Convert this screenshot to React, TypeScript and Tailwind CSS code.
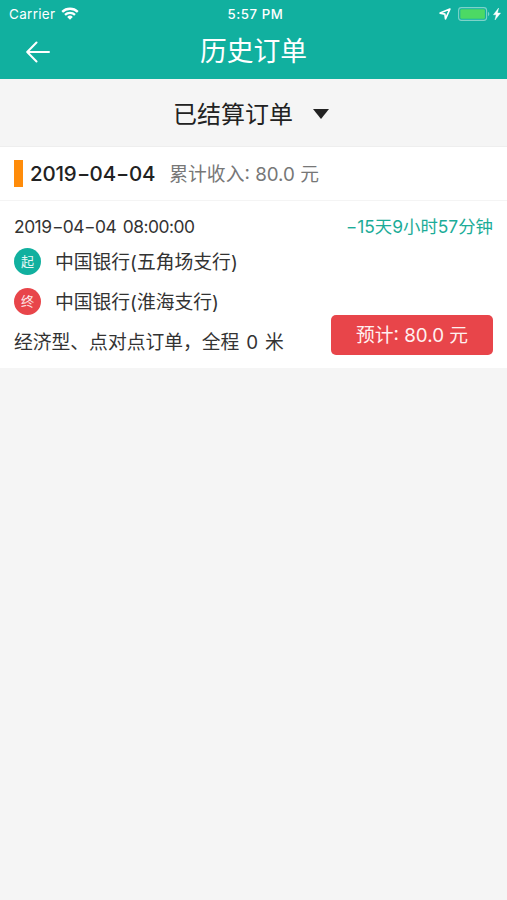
import { Fragment } from 'react';

const FONT = "font-['Inter','Noto_Sans_CJK_SC',sans-serif]";

function Dashed({ text }: { text: string }) {
  return (
    <>
      {text.split('-').map((part, i) => (
        <Fragment key={i}>
          {i > 0 && <span className="inline-block w-[0.64em] origin-center scale-x-[1.4] text-center">-</span>}
          {part}
        </Fragment>
      ))}
    </>
  );
}

function StatusBar() {
  return (
    <div className="grid h-[27px] grid-cols-3 items-center pl-[9px] pr-[5px] text-[13px] leading-none">
      <div className="flex items-center gap-[6px]">
        <span className="pt-[2px] text-[13.5px] tracking-[0.3px]">Carrier</span>
        <svg width="18" height="13" viewBox="0 0 18 13" fill="none" stroke="white" strokeWidth="2.3">
          <path d="M1.2 4.9a11.2 11.2 0 0 1 15.6 0" />
          <path d="M4 7.9a7.2 7.2 0 0 1 10 0" />
          <path d="M9 12.7 6.2 9.9a4 4 0 0 1 5.6 0z" fill="white" stroke="none" />
        </svg>
      </div>
      <span className="pt-[2px] text-center text-[13.2px] font-medium tracking-[0.6px]">5:57 PM</span>
      <div className="flex items-center justify-end">
        <svg width="12" height="12" viewBox="0 0 12 12" fill="none" stroke="white" strokeWidth="1.6" strokeLinejoin="round">
          <path d="M10.9 1.1 1.1 5.1l4.8 1 .6 4.8z" />
        </svg>
        <svg className="ml-[7px]" width="32" height="14" viewBox="0 0 32 14">
          <rect x="0.6" y="0.6" width="28" height="12.8" rx="2.8" fill="none" stroke="#7ed3c9" strokeWidth="1.1" />
          <rect x="2.3" y="2.3" width="24.6" height="9.4" rx="1.2" fill="#4cd964" />
          <path d="M30 4.8c1.8.8 1.8 3.6 0 4.4z" fill="#7ed3c9" />
        </svg>
        <svg className="ml-[3px] mr-px" width="8" height="12" viewBox="0 0 8 12" fill="white" stroke="white" strokeWidth="0.4">
          <path d="M5.6 0 .4 6.8h2.8L2 12l5.6-7H4.5z" />
        </svg>
      </div>
    </div>
  );
}

function Stop({ badge, color, name }: { badge: string; color: string; name: string }) {
  return (
    <div className="flex h-10 items-center">
      <span className={`flex size-[27px] items-center justify-center rounded-full text-[13px] leading-none text-white/90 ${color}`}>
        {badge}
      </span>
      <span className="ml-[14px] pt-[4px] text-[18.8px]">{name}</span>
    </div>
  );
}

export default function App() {
  return (
    <div className={`min-h-[900px] w-full bg-[#f5f5f5] leading-none text-[#333] ${FONT}`}>
      <header className="h-[79px] bg-[#11b09f] text-white">
        <StatusBar />
        <div className="grid h-[48px] grid-cols-[80px_1fr_80px] items-center">
          <svg className="ml-[26px] mt-[2px]" width="25" height="22" viewBox="0 0 25 22" fill="none" stroke="white" strokeWidth="2" strokeLinecap="round" strokeLinejoin="round">
            <path d="M10.5 1.5 1.2 11l9.3 9.5M1.5 11H23" />
          </svg>
          <h1 className="text-center text-[26.8px]">历史订单</h1>
        </div>
      </header>

      <div className="flex h-[68px] items-center justify-center border-b border-[#eee] text-[24px] text-[#222]">
        <span className="-ml-[5px] pt-[4px]">已结算订单</span>
        <svg className="ml-[20px] mt-[3px]" width="16" height="10" viewBox="0 0 16 10" fill="#222">
          <path d="M0 0h16L8 10z" />
        </svg>
      </div>

      <section className="bg-white">
        <div className="flex h-[54px] items-center border-b border-[#f4f4f4] pl-[14px]">
          <span className="h-[27px] w-[9px] bg-[#ff8c0a]" />
          <span className="ml-[7px] pt-[2px] text-[20.5px] font-medium tracking-[-0.2px] text-[#222]"><Dashed text="2019-04-04" /></span>
          <span className="ml-[14px] pt-[4px] text-[18.8px] text-[#777]">累计收入: 80.0 元</span>
        </div>

        <div className="h-[167px] px-[14px] pt-[10px]">
          <div className="flex h-[30px] items-center justify-between pt-[2px]">
            <span className="text-[17.4px] tracking-[-0.48px] [word-spacing:2px]"><Dashed text="2019-04-04 08:00:00" /></span>
            <span className="text-[17.4px] text-[#1cac98]"><Dashed text="-15天9小时57分钟" /></span>
          </div>
          <Stop badge="起" color="bg-[#11b09f]" name="中国银行(五角场支行)" />
          <Stop badge="终" color="bg-[#e8454a]" name="中国银行(淮海支行)" />
          <div className="flex h-10 items-center justify-between">
            <span className="pt-[5px] text-[18.8px] [word-spacing:1.6px]">经济型、点对点订单，全程 0 米</span>
            <button className="-mt-[13px] h-10 w-[162px] rounded-[5px] bg-[#e8454a] pt-[4px] text-[18.8px] text-[#fff0f0]">预计: 80.0 元</button>
          </div>
        </div>
      </section>
    </div>
  );
}
